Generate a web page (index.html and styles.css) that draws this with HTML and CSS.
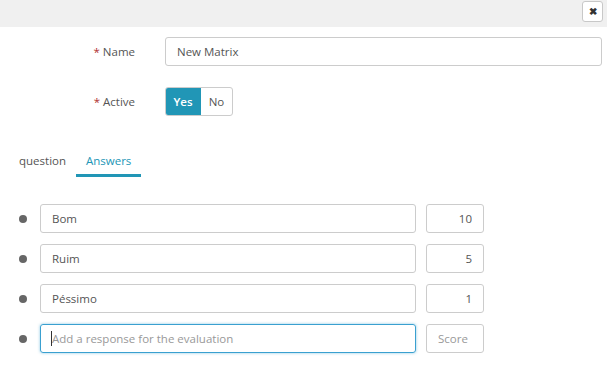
FILE: index.html
```html
<!DOCTYPE html>
<html lang="en">
<head>
<meta charset="UTF-8">
<title>Matrix</title>
<link rel="stylesheet" href="styles.css">
</head>
<body>
<div class="topbar">
    <button class="close">&#10006;</button>
</div>
<div class="form">
    <div class="field">
        <label><span class="req">*</span> Name</label>
        <input class="text" type="text" value="New Matrix">
    </div>
    <div class="field">
        <label><span class="req">*</span> Active</label>
        <div class="toggle">
            <span class="on">Yes</span>
            <span>No</span>
        </div>
    </div>
</div>
<div class="tabs">
    <div class="tab">question</div>
    <div class="tab active">Answers</div>
</div>
<div class="answers">
    <div class="answer">
        <span class="dot"></span>
        <input class="text resp" type="text" value="Bom">
        <input class="text score" type="text" value="10">
    </div>
    <div class="answer">
        <span class="dot"></span>
        <input class="text resp" type="text" value="Ruim">
        <input class="text score" type="text" value="5">
    </div>
    <div class="answer">
        <span class="dot"></span>
        <input class="text resp" type="text" value="Péssimo">
        <input class="text score" type="text" value="1">
    </div>
    <div class="answer">
        <span class="dot"></span>
        <div class="resp focus">
            <span class="caret"></span>
            <input class="bare" type="text" placeholder="Add a response for the evaluation">
        </div>
        <input class="text score" type="text" placeholder="Score">
    </div>
</div>
</body>
</html>
```
FILE: styles.css
```css
body {
    margin: 0;
    font-family: "Open Sans", Arial, sans-serif;
    font-size: 11.5px;
    color: #555;
    background-color: #fff;
}

.topbar {
    height: 27px;
    background-color: #f0f0f0;
    display: flex;
    justify-content: flex-end;
    align-items: flex-start;
    padding-right: 4px;
}

.close {
    width: 21px;
    height: 21px;
    margin-top: 1px;
    padding: 0;
    background-color: #fff;
    border: 1px solid #c8c8c8;
    border-radius: 3px;
    font-size: 10px;
    color: #333;
    font-weight: bold;
}

.form {
    padding-top: 10px;
}

.field {
    display: grid;
    grid-template-columns: 135px 1fr;
    column-gap: 30px;
    align-items: center;
    padding-right: 5px;
    margin-bottom: 21px;
}

.field label {
    text-align: right;
    color: #555;
}

.req {
    color: #b03030;
}

.text {
    box-sizing: border-box;
    height: 29px;
    padding: 0 11px;
    border: 1px solid #ccc;
    border-radius: 3px;
    font-family: inherit;
    font-size: 11.5px;
    color: #555;
    outline: none;
}

.text::placeholder,
.bare::placeholder {
    color: #999;
}

.toggle {
    display: flex;
    width: 68px;
    height: 29px;
    box-sizing: border-box;
    border: 1px solid #ccc;
    border-radius: 3px;
    overflow: hidden;
}

.toggle span {
    flex: 1;
    display: flex;
    align-items: center;
    justify-content: center;
    color: #555;
}

.toggle .on {
    flex: 0 0 36px;
    background-color: #2196b6;
    color: #fff;
    font-weight: 600;
    margin: -1px 0 -1px -1px;
}

.tabs {
    display: flex;
    margin-top: 33px;
    padding-left: 9px;
}

.tab {
    padding: 4px 10px 6px;
    color: #555;
    border-bottom: 3px solid transparent;
}

.tab.active {
    color: #2196b6;
    border-bottom-color: #2196b6;
}

.answers {
    margin-top: 27px;
}

.answer {
    display: flex;
    align-items: center;
    margin-bottom: 11px;
}

.dot {
    width: 8px;
    height: 8px;
    border-radius: 50%;
    background-color: #666;
    margin: 0 13px 0 19px;
}

.resp {
    width: 376px;
}

.score {
    width: 58px;
    margin-left: 10px;
    text-align: right;
}

.score::placeholder {
    text-align: left;
}

.focus {
    box-sizing: border-box;
    height: 29px;
    display: flex;
    align-items: center;
    padding-left: 10px;
    border: 1px solid #3aa0d0;
    border-radius: 3px;
    box-shadow: 0 0 3px rgba(58, 160, 208, 0.6);
}

.caret {
    width: 1px;
    height: 15px;
    background-color: #333;
}

.bare {
    flex: 1;
    border: none;
    outline: none;
    padding: 0;
    font-family: inherit;
    font-size: 11.5px;
    color: #555;
    background: transparent;
}
```
